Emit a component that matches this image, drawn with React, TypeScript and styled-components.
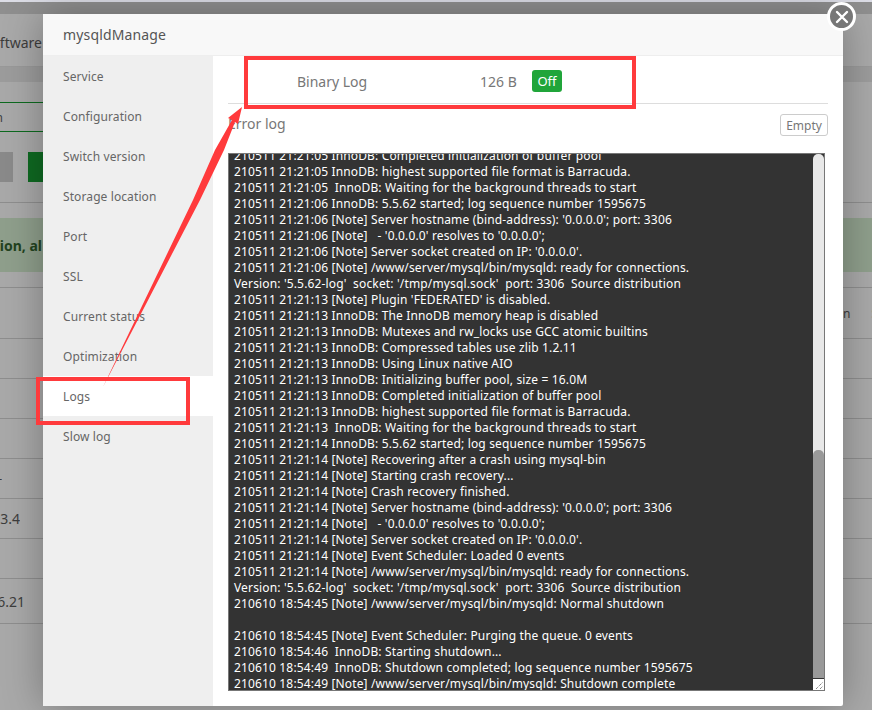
import React from 'react';
import styled, { createGlobalStyle } from 'styled-components';

const LOG_LINES = [
  "210511 21:21:05 InnoDB: Completed initialization of buffer pool",
  "210511 21:21:05 InnoDB: highest supported file format is Barracuda.",
  "210511 21:21:05  InnoDB: Waiting for the background threads to start",
  "210511 21:21:06 InnoDB: 5.5.62 started; log sequence number 1595675",
  "210511 21:21:06 [Note] Server hostname (bind-address): '0.0.0.0'; port: 3306",
  "210511 21:21:06 [Note]   - '0.0.0.0' resolves to '0.0.0.0';",
  "210511 21:21:06 [Note] Server socket created on IP: '0.0.0.0'.",
  "210511 21:21:06 [Note] /www/server/mysql/bin/mysqld: ready for connections.",
  "Version: '5.5.62-log'  socket: '/tmp/mysql.sock'  port: 3306  Source distribution",
  "210511 21:21:13 [Note] Plugin 'FEDERATED' is disabled.",
  "210511 21:21:13 InnoDB: The InnoDB memory heap is disabled",
  "210511 21:21:13 InnoDB: Mutexes and rw_locks use GCC atomic builtins",
  "210511 21:21:13 InnoDB: Compressed tables use zlib 1.2.11",
  "210511 21:21:13 InnoDB: Using Linux native AIO",
  "210511 21:21:13 InnoDB: Initializing buffer pool, size = 16.0M",
  "210511 21:21:13 InnoDB: Completed initialization of buffer pool",
  "210511 21:21:13 InnoDB: highest supported file format is Barracuda.",
  "210511 21:21:13  InnoDB: Waiting for the background threads to start",
  "210511 21:21:14 InnoDB: 5.5.62 started; log sequence number 1595675",
  "210511 21:21:14 [Note] Recovering after a crash using mysql-bin",
  "210511 21:21:14 [Note] Starting crash recovery...",
  "210511 21:21:14 [Note] Crash recovery finished.",
  "210511 21:21:14 [Note] Server hostname (bind-address): '0.0.0.0'; port: 3306",
  "210511 21:21:14 [Note]   - '0.0.0.0' resolves to '0.0.0.0';",
  "210511 21:21:14 [Note] Server socket created on IP: '0.0.0.0'.",
  "210511 21:21:14 [Note] Event Scheduler: Loaded 0 events",
  "210511 21:21:14 [Note] /www/server/mysql/bin/mysqld: ready for connections.",
  "Version: '5.5.62-log'  socket: '/tmp/mysql.sock'  port: 3306  Source distribution",
  "210610 18:54:45 [Note] /www/server/mysql/bin/mysqld: Normal shutdown",
  "",
  "210610 18:54:45 [Note] Event Scheduler: Purging the queue. 0 events",
  "210610 18:54:46  InnoDB: Starting shutdown...",
  "210610 18:54:49  InnoDB: Shutdown completed; log sequence number 1595675",
  "210610 18:54:49 [Note] /www/server/mysql/bin/mysqld: Shutdown complete",
];

const MENU = [
  'Service',
  'Configuration',
  'Switch version',
  'Storage location',
  'Port',
  'SSL',
  'Current status',
  'Optimization',
  'Logs',
  'Slow log',
];

const App = () => {
  return (
    <Page>
      <GlobalStyle />
      <TopEdge />
      <Header>
        <LeftClip>Software</LeftClip>
      </Header>
      <SubBand />
      <Spacer $h={20} />
      <TabRow>
        <ActiveTab>
          <LeftClip $size={12} $w={3}>n</LeftClip>
        </ActiveTab>
      </TabRow>
      <ButtonRow>
        <GrayBtn />
        <GreenBtn />
      </ButtonRow>
      <Spacer $h={15} />
      <Alert>
        <LeftClip $bold $color="#23431f">Attention, al</LeftClip>
      </Alert>
      <Spacer $h={15} />
      <TableRow $h={51}>
        <span />
        <RightCells>
          <span>n</span>
          <span>S</span>
        </RightCells>
      </TableRow>
      <TableRow $h={40} />
      <TableRow $h={40} />
      <TableRow $h={40} />
      <TableRow $h={40}>
        <LeftClip $size={12} $w={2}>-</LeftClip>
      </TableRow>
      <TableRow $h={40}>
        <LeftClip $size={14} $w={20}>3.4</LeftClip>
      </TableRow>
      <TableRow $h={40} />
      <TableRow $h={45}>
        <LeftClip $size={14} $w={25}>6.21</LeftClip>
      </TableRow>
      <TableRow $h={45} />

      <Modal>
        <CloseButton aria-label="close">
          <svg width="14" height="14" viewBox="0 0 14 14">
            <path d="M2 2 L12 12 M12 2 L2 12" stroke="#fff" strokeWidth="2.4" strokeLinecap="round" />
          </svg>
        </CloseButton>
        <TitleBar>mysqldManage</TitleBar>
        <ModalBody>
          <Sidebar>
            {MENU.map((item) => (
              <MenuItem key={item} $active={item === 'Logs'}>
                {item}
              </MenuItem>
            ))}
          </Sidebar>
          <Content>
            <BinlogRow>
              <BinlogName>Binary Log</BinlogName>
              <BinlogSize>126 B</BinlogSize>
              <Badge>Off</Badge>
            </BinlogRow>
            <LogHeader>
              <LogTitle>Error log</LogTitle>
              <EmptyButton>Empty</EmptyButton>
            </LogHeader>
            <LogBox>
              <LogText>
                {LOG_LINES.map((line, i) => (
                  <LogLine key={i}>{line || ' '}</LogLine>
                ))}
              </LogText>
              <ScrollTrack>
                <ScrollThumb />
              </ScrollTrack>
              <ResizeCorner>
                <svg width="9" height="9" viewBox="0 0 9 9">
                  <path d="M1 8 L8 1 M5 8 L8 5" stroke="#555" strokeWidth="1" strokeDasharray="1 1" />
                </svg>
              </ResizeCorner>
            </LogBox>
          </Content>
        </ModalBody>
      </Modal>

      <Annotations viewBox="0 0 872 710" width="872" height="710">
        <rect x="246" y="58" width="388" height="49" fill="none" stroke="#ff3a3c" strokeWidth="4" />
        <rect x="38" y="379" width="150" height="44" fill="none" stroke="#ff3a3c" strokeWidth="4" />
        <polygon
          points="103,387 193,200 215,150 232,120 228,118 242,107 238,124 235,122 224,150 200,200"
          fill="#ff3a3c"
        />
      </Annotations>
    </Page>
  );
};

const GlobalStyle = createGlobalStyle`
  html, body {
    margin: 0;
    padding: 0;
    background: #a8a8a8;
    overflow: hidden;
  }
  * {
    box-sizing: border-box;
  }
`;

const Page = styled.div`
  position: relative;
  width: 872px;
  height: 710px;
  overflow: hidden;
  background: #a9a9a9;
  font-family: 'Noto Sans', 'Open Sans', sans-serif;
`;

const TopEdge = styled.div`
  height: 14px;
  border-top: 2px solid #dcdde6;
  background: #8f8f8f;
`;

const Header = styled.div`
  height: 53px;
  display: flex;
  align-items: center;
  padding-top: 4px;
  border-bottom: 1px solid #999;
`;

const LeftClip = styled.div<{ $size?: number; $bold?: boolean; $color?: string; $w?: number }>`
  width: ${(p) => p.$w ?? 42}px;
  display: flex;
  justify-content: flex-end;
  overflow: hidden;
  white-space: nowrap;
  font-size: ${(p) => p.$size ?? 14}px;
  font-weight: ${(p) => (p.$bold ? 700 : 400)};
  color: ${(p) => p.$color ?? '#3d3d3d'};
`;

const SubBand = styled.div`
  height: 15px;
  background: #9c9c9c;
`;

const Spacer = styled.div<{ $h: number }>`
  height: ${(p) => p.$h}px;
`;

const TabRow = styled.div`
  height: 30px;
  display: flex;
`;

const ActiveTab = styled.div`
  width: 43px;
  display: flex;
  align-items: center;
  border-top: 1px solid #0d6a1f;
  border-bottom: 1px solid #0d6a1f;
`;

const ButtonRow = styled.div`
  height: 71px;
  padding-top: 20px;
  display: flex;
  gap: 15px;
  border-bottom: 1px solid #8e8e8e;
`;

const GrayBtn = styled.div`
  width: 13px;
  height: 30px;
  background: #8a8a8a;
`;

const GreenBtn = styled.div`
  width: 16px;
  height: 30px;
  background: #0f6a22;
`;

const Alert = styled.div`
  height: 54px;
  display: flex;
  align-items: center;
  background: #8f9f8c;
`;

const TableRow = styled.div<{ $h: number }>`
  height: ${(p) => p.$h}px;
  display: flex;
  align-items: center;
  justify-content: space-between;
  border-top: 1px solid #8e8e8e;
`;

const RightCells = styled.div`
  display: flex;
  gap: 21px;
  font-size: 12px;
  color: #3d3d3d;
  white-space: nowrap;
  margin-right: -6px;
`;

const Modal = styled.div`
  position: absolute;
  left: 43px;
  top: 14px;
  width: 800px;
  height: 692px;
  background: #fff;
  border-radius: 2px;
  box-shadow: 0 0 40px rgba(0, 0, 0, 0.3);
  display: flex;
  flex-direction: column;
`;

const CloseButton = styled.button`
  position: absolute;
  right: -13px;
  top: -12px;
  width: 29px;
  height: 29px;
  padding: 0;
  border: 3px solid #fff;
  border-radius: 50%;
  background: #777;
  display: flex;
  align-items: center;
  justify-content: center;
`;

const TitleBar = styled.div`
  height: 42px;
  padding-left: 20px;
  display: flex;
  align-items: center;
  background: #f8f8f8;
  border-bottom: 1px solid #eee;
  font-size: 14px;
  letter-spacing: 0.15px;
  color: #555;
`;

const ModalBody = styled.div`
  flex: 1;
  display: flex;
  min-height: 0;
`;

const Sidebar = styled.div`
  width: 170px;
  background: #efefef;
  display: flex;
  flex-direction: column;
`;

const MenuItem = styled.div<{ $active?: boolean }>`
  height: 40px;
  padding-left: 20px;
  display: flex;
  align-items: center;
  font-size: 12px;
  letter-spacing: 0.1px;
  color: #666;
  background: ${(p) => (p.$active ? '#fff' : 'transparent')};
`;

const Content = styled.div`
  width: 630px;
  padding: 0 15px;
  display: flex;
  flex-direction: column;
`;

const BinlogRow = styled.div`
  width: 600px;
  height: 48px;
  padding-top: 3px;
  display: flex;
  align-items: center;
  border-bottom: 1px solid #ddd;
  color: #777;
  font-size: 14px;
`;

const BinlogName = styled.span`
  margin-left: 69px;
  width: 183px;
`;

const BinlogSize = styled.span`
  width: 52px;
`;

const Badge = styled.span`
  width: 30px;
  height: 22px;
  border-radius: 3px;
  background: #20a53a;
  color: #fff;
  font-size: 13px;
  display: flex;
  align-items: center;
  justify-content: center;
`;

const LogHeader = styled.div`
  width: 600px;
  height: 49px;
  padding-top: 10px;
  display: flex;
  justify-content: space-between;
  align-items: flex-start;
`;

const LogTitle = styled.span`
  font-size: 14px;
  color: #777;
  line-height: 20px;
`;

const EmptyButton = styled.button`
  width: 48px;
  height: 22px;
  padding: 0;
  border: 1px solid #ccc;
  border-radius: 3px;
  background: #fff;
  color: #777;
  font-family: inherit;
  font-size: 12px;
`;

const LogBox = styled.div`
  position: relative;
  width: 597px;
  height: 538px;
  background: #333;
  border: 1px solid #777;
  overflow: hidden;
`;

const LogText = styled.div`
  margin-top: -6px;
  padding-left: 5px;
`;

const LogLine = styled.div`
  height: 16px;
  line-height: 16px;
  font-size: 12px;
  letter-spacing: 0.15px;
  color: #fff;
  white-space: pre;
`;

const ScrollTrack = styled.div`
  position: absolute;
  right: 0;
  top: 0;
  bottom: 12px;
  width: 11px;
  background: #e8e8e8;
  border-radius: 5px 5px 0 0;
`;

const ScrollThumb = styled.div`
  position: absolute;
  left: 0;
  right: 0;
  bottom: 0;
  height: 228px;
  background: #999;
  border-radius: 5px 5px 0 0;
`;

const ResizeCorner = styled.div`
  position: absolute;
  right: 0;
  bottom: 0;
  width: 11px;
  height: 11px;
  background: #fff;
  display: flex;
  align-items: flex-end;
  justify-content: flex-end;
`;

const Annotations = styled.svg`
  position: absolute;
  left: 0;
  top: 0;
  pointer-events: none;
`;

export default App;
